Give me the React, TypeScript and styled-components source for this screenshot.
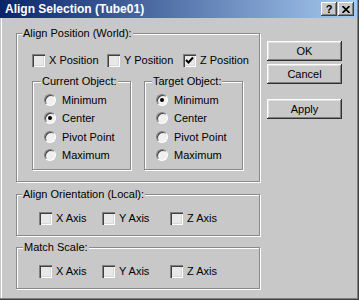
import React from "react";
import styled, { createGlobalStyle } from "styled-components";

const GlobalStyle = createGlobalStyle`
	body {
		margin: 0;
		background: #c8c8c8;
	}
`;

const Window = styled.div`
	width: 359px;
	height: 300px;
	box-sizing: border-box;
	display: flex;
	flex-direction: column;
	padding: 0 2px 2px 0;
	background: #c8c8c8;
	box-shadow: inset -1px -1px 0 #404040, inset -2px -2px 0 #808080;
	font-family: "Liberation Sans", Arial, sans-serif;
	font-size: 11px;
	color: #000;
	overflow: hidden;
`;

const TitleBar = styled.div`
	height: 18px;
	display: flex;
	align-items: center;
	padding: 0 3px 0 5px;
	background: linear-gradient(to right, #0a246a, #a6caf0);
	color: #fff;
	font-weight: bold;
	font-size: 12px;

	.title {
		flex: 1;
	}
`;

const TitleButton = styled.div`
	width: 16px;
	height: 14px;
	box-sizing: border-box;
	display: flex;
	align-items: center;
	justify-content: center;
	margin-left: 1px;
	background: #c8c8c8;
	box-shadow: inset -1px -1px 0 #404040, inset 1px 1px 0 #fff,
		inset -2px -2px 0 #808080;
	color: #000;
	font-weight: bold;
	font-size: 11px;
	line-height: 14px;
`;

const Body = styled.div`
	flex: 1;
	display: flex;
	align-items: flex-start;
	margin-left: 1px;
	padding: 9px 0 0 14px;
	border-left: 1px solid #fff;
`;

const LeftColumn = styled.div`
	width: 244px;
	display: flex;
	flex-direction: column;
`;

const Group = styled.fieldset<{ $width?: number; $top?: number }>`
	margin: ${(p) => p.$top ?? 0}px 0 0 0;
	padding: 0;
	width: ${(p) => p.$width ?? 244}px;
	box-sizing: border-box;
	border: 1px solid #8a8a8a;
	box-shadow: 1px 1px 0 #fff, inset 1px 1px 0 #fff;
	min-width: 0;
`;

const Legend = styled.legend<{ $indent: number }>`
	margin-left: ${(p) => p.$indent}px;
	padding: 0 1px;
	line-height: 13px;
	background: #c8c8c8;
`;

const GroupContent = styled.div<{ $pad: string }>`
	padding: ${(p) => p.$pad};
`;

const CheckRow = styled.div<{ $cols: string }>`
	display: grid;
	grid-template-columns: ${(p) => p.$cols};
	height: 13px;
	align-items: center;
`;

const CheckItem = styled.label`
	display: flex;
	align-items: center;
	gap: 4px;
	line-height: 13px;
	white-space: nowrap;
`;

const CheckBox = styled.span`
	width: 13px;
	height: 13px;
	box-sizing: border-box;
	display: flex;
	align-items: center;
	justify-content: center;
	background: #e8e8e8;
	box-shadow: inset 1px 1px 0 #808080, inset 2px 2px 0 #404040,
		inset -1px -1px 0 #fff, inset -2px -2px 0 #d8d8d8;
`;

const SubGroups = styled.div`
	display: flex;
	gap: 13px;
	margin-top: 8px;
`;

const RadioList = styled.div`
	display: flex;
	flex-direction: column;
	padding: 3px 0 5px 11px;
`;

const RadioItem = styled.label`
	height: 18.33px;
	display: flex;
	align-items: center;
	gap: 6px;
	white-space: nowrap;
`;

const RadioDot = styled.span<{ $checked?: boolean }>`
	width: 12px;
	height: 12px;
	box-sizing: border-box;
	border-radius: 50%;
	display: flex;
	align-items: center;
	justify-content: center;
	background: #f0f0f0;
	border: 1px solid;
	border-color: #808080 #fff #fff #808080;
	box-shadow: inset 1px 1px 0 #404040;

	&::after {
		content: "";
		display: ${(p) => (p.$checked ? "block" : "none")};
		width: 4px;
		height: 4px;
		border-radius: 50%;
		background: #000;
	}
`;

const RightColumn = styled.div`
	display: flex;
	flex-direction: column;
	gap: 3px;
	margin: 14px 0 0 7px;
`;

const Button = styled.button<{ $gapTop?: number }>`
	width: 75px;
	height: 20px;
	margin-top: ${(p) => p.$gapTop ?? 0}px;
	padding: 0;
	border: none;
	background: #c8c8c8;
	box-shadow: inset -1px -1px 0 #303030, inset 1px 1px 0 #fff,
		inset -2px -2px 0 #808080, inset 2px 2px 0 #e0e0e0;
	font-family: "Liberation Sans", Arial, sans-serif;
	font-size: 11px;
	color: #000;
`;

const Check = ({ label, checked }: { label: string; checked?: boolean }) => (
	<CheckItem>
		<CheckBox>
			{checked && (
				<svg width="9" height="9" viewBox="0 0 9 9">
					<path d="M1 4 L3.5 6.5 L8 1.5" stroke="#000" strokeWidth="2" fill="none" />
				</svg>
			)}
		</CheckBox>
		{label}
	</CheckItem>
);

const Radio = ({ label, checked }: { label: string; checked?: boolean }) => (
	<RadioItem>
		<RadioDot $checked={checked} />
		{label}
	</RadioItem>
);

const radioLabels = ["Minimum", "Center", "Pivot Point", "Maximum"];

const App = () => {
	return (
		<Window>
			<GlobalStyle />
			<TitleBar>
				<span className="title">Align Selection (Tube01)</span>
				<TitleButton>?</TitleButton>
				<TitleButton>
					<svg width="8" height="7" viewBox="0 0 8 7">
						<path d="M0.5 0 L7.5 7 M7.5 0 L0.5 7" stroke="#000" strokeWidth="1.6" />
					</svg>
				</TitleButton>
			</TitleBar>
			<Body>
				<LeftColumn>
					<Group>
						<Legend $indent={5}>Align Position (World):</Legend>
						<GroupContent $pad="14px 0 11px 15px">
							<CheckRow $cols="75px 76px auto">
								<Check label="X Position" />
								<Check label="Y Position" />
								<Check label="Z Position" checked />
							</CheckRow>
							<SubGroups>
								<Group $width={99}>
									<Legend $indent={8}>Current Object:</Legend>
									<RadioList>
										{radioLabels.map((l) => (
											<Radio key={l} label={l} checked={l === "Center"} />
										))}
									</RadioList>
								</Group>
								<Group $width={99}>
									<Legend $indent={7}>Target Object:</Legend>
									<RadioList>
										{radioLabels.map((l) => (
											<Radio key={l} label={l} checked={l === "Minimum"} />
										))}
									</RadioList>
								</Group>
							</SubGroups>
						</GroupContent>
					</Group>
					<Group $top={6}>
						<Legend $indent={5}>Align Orientation (Local):</Legend>
						<GroupContent $pad="11px 0 10px 22px">
							<CheckRow $cols="63px 68px auto">
								<Check label="X Axis" />
								<Check label="Y Axis" />
								<Check label="Z Axis" />
							</CheckRow>
						</GroupContent>
					</Group>
					<Group $top={5}>
						<Legend $indent={6}>Match Scale:</Legend>
						<GroupContent $pad="11px 0 10px 22px">
							<CheckRow $cols="63px 68px auto">
								<Check label="X Axis" />
								<Check label="Y Axis" />
								<Check label="Z Axis" />
							</CheckRow>
						</GroupContent>
					</Group>
				</LeftColumn>
				<RightColumn>
					<Button>OK</Button>
					<Button>Cancel</Button>
					<Button $gapTop={12}>Apply</Button>
				</RightColumn>
			</Body>
		</Window>
	);
};

export default App;
